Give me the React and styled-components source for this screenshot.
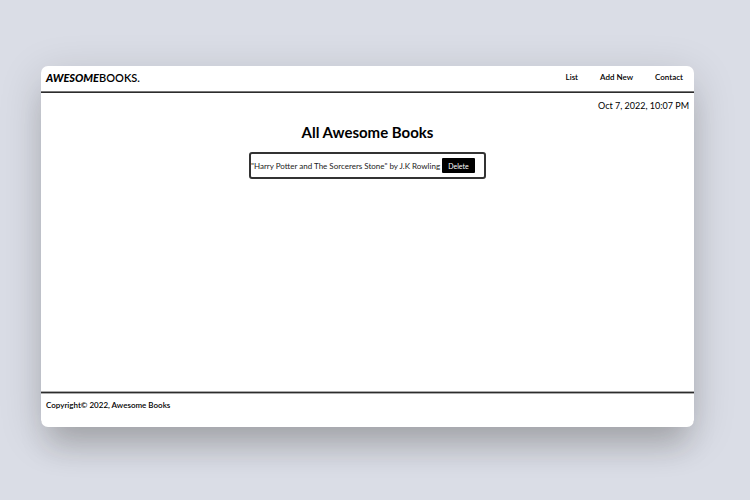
import React from 'react';
import styled, { createGlobalStyle } from 'styled-components';

const GlobalStyle = createGlobalStyle`
  * { box-sizing: border-box; }
  body {
    margin: 0;
    background: #dadde6;
    color: #000;
    font-family: Lato, sans-serif;
  }
`;

const Page = styled.div`
  min-height: 100vh;
  padding: 66px 56px 73px 41px;
  display: flex;
`;

const Window = styled.div`
  flex: 1;
  display: flex;
  flex-direction: column;
  background: #fff;
  border-radius: 7px;
  box-shadow: 0 10px 44px rgba(0, 0, 0, 0.16), 0 26px 28px -8px rgba(40, 36, 20, 0.18);
`;

const Header = styled.header`
  display: flex;
  align-items: center;
  justify-content: space-between;
  height: 27px;
  padding: 0 11px 3px 5px;
  border-bottom: 1px solid #2c2c2c;
  box-shadow: inset 0 -1px #777;
`;

const Logo = styled.a`
  color: inherit;
  text-decoration: none;
  font-size: 11px;
  line-height: 16px;
  font-weight: 600;
`;

const LogoAccent = styled.span`
  font-weight: 900;
  font-style: italic;
`;

const Nav = styled.nav`
  display: flex;
  gap: 22px;
`;

const NavLink = styled.a`
  color: inherit;
  text-decoration: none;
  font-size: 8px;
  line-height: 13px;
  font-weight: 600;
`;

const Main = styled.main`
  flex: 1;
  display: flex;
  flex-direction: column;
`;

const DateTime = styled.time`
  align-self: flex-end;
  padding: 7px 5px 0 0;
  font-size: 9px;
  line-height: 12px;
`;

const Title = styled.h1`
  margin: 10px 0;
  font-size: 15px;
  line-height: 20px;
  font-weight: 700;
  text-align: center;
`;

const BookList = styled.ul`
  align-self: center;
  width: 237px;
  margin: 0;
  padding: 0;
  list-style: none;
  border: 2px solid #333;
  border-radius: 3px;
`;

const Book = styled.li`
  display: flex;
  align-items: center;
  justify-content: space-between;
  padding: 4px 9px 4px 0;
  color: #222;
  font-size: 8px;
`;

const DeleteButton = styled.button`
  width: 33px;
  height: 15px;
  padding: 0;
  border: 0;
  border-radius: 1px;
  background: #000;
  color: #fff;
  font: 7px Lato, sans-serif;
`;

const Footer = styled.footer`
  height: 35px;
  padding: 6px 5px;
  border-top: 1px solid #2c2c2c;
  box-shadow: 0 -1px #aaa, inset 0 1px #aaa;
  border-radius: 0 0 7px 7px;
  font-size: 8px;
  line-height: 12px;
  font-weight: 600;
`;

const books = [{ title: 'Harry Potter and The Sorcerers Stone', author: 'J.K Rowling' }];

export default function App() {
  return (
    <Page>
      <GlobalStyle />
      <Window>
        <Header>
          <Logo href="#"><LogoAccent>AWESOME</LogoAccent>BOOKS.</Logo>
          <Nav>
            <NavLink href="#list">List</NavLink>
            <NavLink href="#add">Add New</NavLink>
            <NavLink href="#contact">Contact</NavLink>
          </Nav>
        </Header>
        <Main>
          <DateTime dateTime="2022-10-07T22:07">Oct 7, 2022, 10:07 PM</DateTime>
          <Title>All Awesome Books</Title>
          <BookList>
            {books.map((book) => (
              <Book key={book.title}>
                <span>"{book.title}" by {book.author}</span>
                <DeleteButton type="button">Delete</DeleteButton>
              </Book>
            ))}
          </BookList>
        </Main>
        <Footer>Copyright© 2022, Awesome Books</Footer>
      </Window>
    </Page>
  );
}
